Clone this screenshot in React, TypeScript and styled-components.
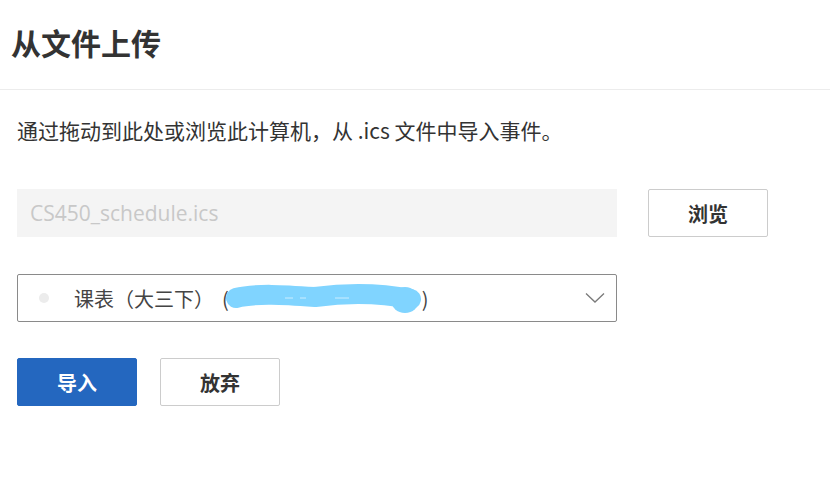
import styled, { createGlobalStyle } from "styled-components";

const GlobalStyle = createGlobalStyle`
  html, body {
    margin: 0;
    padding: 0;
    background: #ffffff;
  }
  body {
    font-family: "Noto Sans", "Noto Sans CJK SC", sans-serif;
    color: #333333;
  }
`;

const Page = styled.div`
  width: 830px;
  height: 486px;
  display: flex;
  flex-direction: column;
`;

const Header = styled.header`
  height: 90px;
  padding: 0 11px;
  display: flex;
  align-items: center;
  border-bottom: 1px solid #ececec;
  box-sizing: border-box;
`;

const Title = styled.h1`
  margin: 0 0 6px;
  font-size: 30px;
  font-weight: 700;
  color: #333333;
  font-family: "Noto Sans CJK SC", sans-serif;
`;

const Body = styled.main`
  padding: 26px 17px 0;
  display: flex;
  flex-direction: column;
`;

const Description = styled.p`
  margin: 0 0 45px;
  font-size: 21px;
  line-height: 28px;
  color: #333333;
  font-family: "Noto Sans CJK SC", sans-serif;
`;

const FileRow = styled.div`
  display: flex;
  gap: 31px;
  margin-bottom: 37px;
`;

const FileField = styled.div`
  width: 600px;
  height: 48px;
  background: #f4f4f4;
  display: flex;
  align-items: center;
  padding: 0 13px;
  box-sizing: border-box;
  font-size: 21px;
  color: #c8c8c8;
  font-family: "Open Sans", "Noto Sans", sans-serif;
`;

const Button = styled.button<{ $primary?: boolean }>`
  width: 120px;
  height: 48px;
  box-sizing: border-box;
  border-radius: 2px;
  border: 1px solid ${({ $primary }) => ($primary ? "#2467bf" : "#cccccc")};
  background: ${({ $primary }) => ($primary ? "#2467bf" : "#ffffff")};
  color: ${({ $primary }) => ($primary ? "#ffffff" : "#333333")};
  font-size: 20px;
  font-weight: 700;
  font-family: "Noto Sans CJK SC", sans-serif;
  padding: 0;
  cursor: pointer;
`;

const Select = styled.div`
  width: 600px;
  height: 48px;
  box-sizing: border-box;
  border: 1px solid #8a8a8a;
  border-radius: 2px;
  display: flex;
  align-items: center;
  padding: 0 11px 0 21px;
  margin-bottom: 36px;
`;

const Dot = styled.span`
  width: 10px;
  height: 10px;
  border-radius: 50%;
  background: #ececec;
  flex: none;
  margin-right: 25px;
`;

const SelectLabel = styled.span`
  flex: 1;
  display: flex;
  align-items: center;
  font-size: 20px;
  color: #444444;
  font-family: "Noto Sans CJK SC", sans-serif;
  white-space: pre;
`;

const Paren = styled.span`
  margin-left: 8px;
`;

const Redacted = styled.svg`
  flex: none;
  margin: 0 -3px 0 -4px;
`;

const Actions = styled.div`
  display: flex;
  gap: 23px;
`;

export default function App() {
  return (
    <Page>
      <GlobalStyle />
      <Header>
        <Title>从文件上传</Title>
      </Header>
      <Body>
        <Description>通过拖动到此处或浏览此计算机，从 .ics 文件中导入事件。</Description>
        <FileRow>
          <FileField>CS450_schedule.ics</FileField>
          <Button>浏览</Button>
        </FileRow>
        <Select>
          <Dot />
          <SelectLabel>
            课表（大三下）
            <Paren>(</Paren>
            <Redacted width="200" height="34" viewBox="0 0 200 34">
              <path
                d="M11 17 C 30 12, 60 14, 90 16 C 120 12, 150 11, 186 18"
                stroke="#80d4ff"
                strokeWidth="20"
                strokeLinecap="round"
                fill="none"
              />
              <ellipse cx="180" cy="19" rx="14" ry="13" fill="#80d4ff" />
              <path d="M60 17 h8 M75 17 h6 M110 17 h14" stroke="#ffffff" strokeWidth="1" opacity="0.6" />
            </Redacted>
            {")"}
          </SelectLabel>
          <svg width="20" height="12" viewBox="0 0 20 12">
            <path d="M1 1.5 L10 10 L19 1.5" stroke="#7a7a7a" strokeWidth="1.3" fill="none" />
          </svg>
        </Select>
        <Actions>
          <Button $primary>导入</Button>
          <Button>放弃</Button>
        </Actions>
      </Body>
    </Page>
  );
}
